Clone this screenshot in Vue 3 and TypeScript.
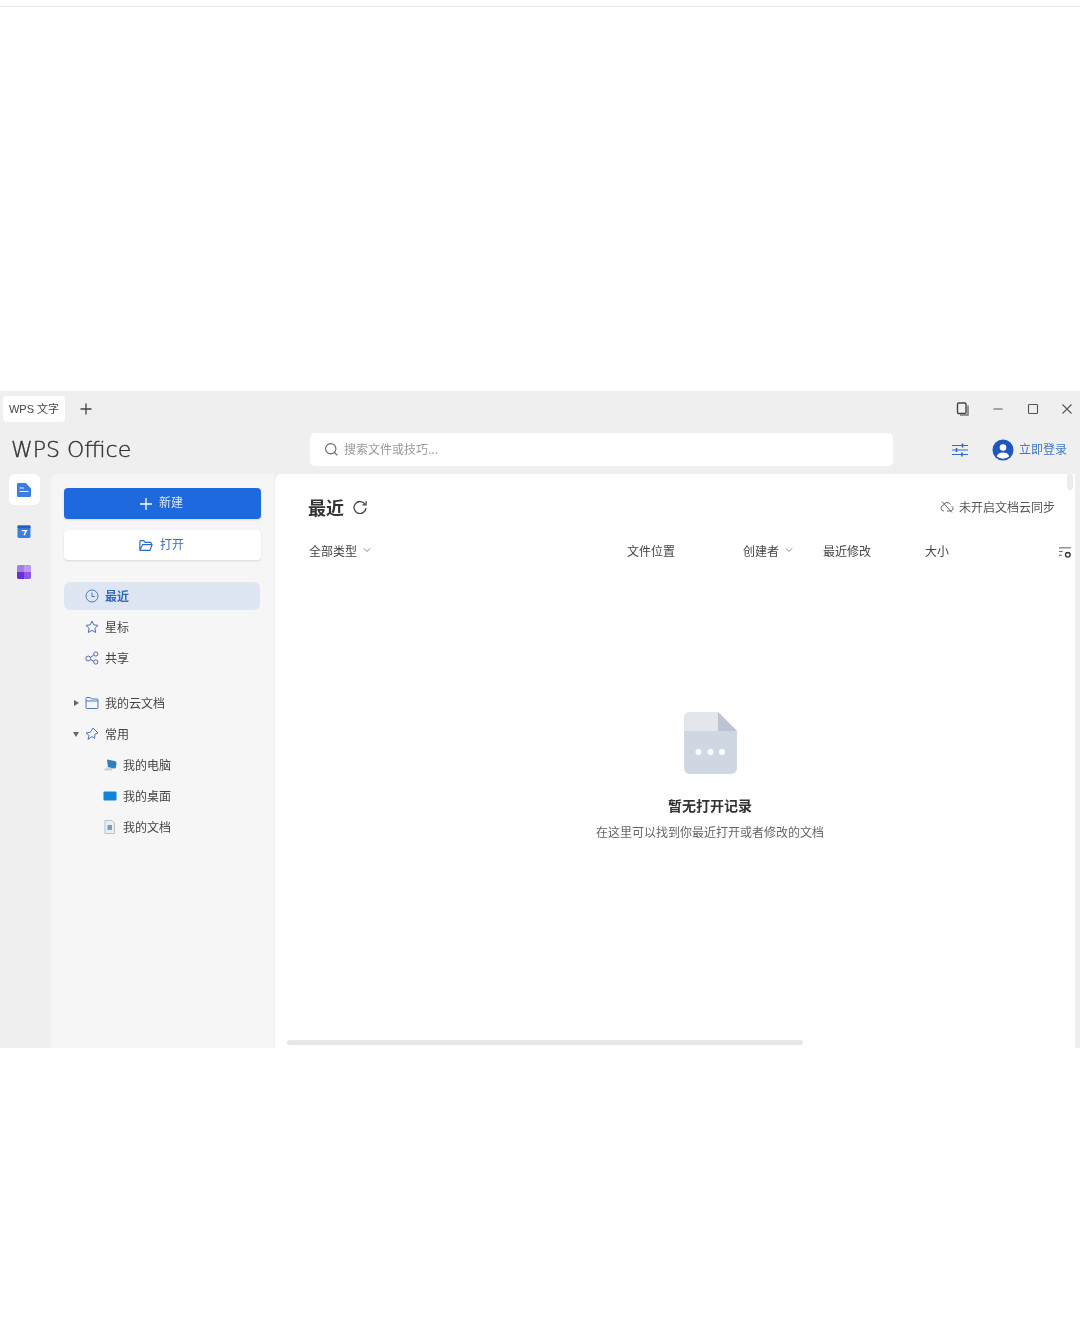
<script setup lang="ts">
const primaryNav = [
  { label: '最近', icon: 'clock', active: true },
  { label: '星标', icon: 'star', active: false },
  { label: '共享', icon: 'share', active: false },
]
const columns = ['文件位置', '创建者', '最近修改', '大小']
</script>

<template>
  <div class="page">
    <div class="topline"></div>
    <section class="window">
      <div class="titlebar">
        <div class="tab"><span>WPS 文字</span></div>
        <svg class="plus" viewBox="0 0 12 12" width="12" height="12"><path d="M6 .5v11M.5 6h11" stroke="#444" stroke-width="1.300" fill="none"/></svg>
        <div class="winctl">
          <svg viewBox="0 0 14 14" width="14" height="14"><rect x="1.500" y="1" width="8.500" height="10.500" rx="1.200" fill="none" stroke="#444" stroke-width="1.400"/><path d="M12 3.500v9.500H4" fill="none" stroke="#777" stroke-width="1.500"/></svg>
          <svg viewBox="0 0 12 12" width="12" height="12"><path d="M1.500 6h9" stroke="#666" stroke-width="1.100"/></svg>
          <svg viewBox="0 0 12 12" width="12" height="12"><rect x="1.500" y="1.500" width="9" height="9" rx="0.800" fill="none" stroke="#555" stroke-width="1.100"/></svg>
          <svg viewBox="0 0 12 12" width="12" height="12"><path d="M1.500 1.500l9 9M10.500 1.500l-9 9" stroke="#555" stroke-width="1.100"/></svg>
        </div>
      </div>
      <header class="appbar">
        <div class="logo">WPS Office</div>
        <div class="search">
          <svg viewBox="0 0 16 16" width="15" height="15"><circle cx="7.200" cy="7.200" r="5.500" fill="none" stroke="#666" stroke-width="1.200"/><path d="M11.200 11.200l3 3" stroke="#666" stroke-width="1.200"/></svg>
          <span>搜索文件或技巧...</span>
        </div>
        <div class="userbox">
          <svg viewBox="0 0 16 16" width="16" height="16"><path d="M0 3.500h16M0 8h16M0 12.500h16" stroke="#2f6cc4" stroke-width="1.200"/><path d="M10.500 1.500v4M4.500 6v4M10 10.500v4" stroke="#2f6cc4" stroke-width="1.600"/></svg>
          <div class="login">
            <svg viewBox="0 0 22 22" width="22" height="22"><circle cx="11" cy="11" r="10.500" fill="#1f56c3"/><circle cx="11" cy="8.500" r="3.300" fill="#fff"/><path d="M4.800 17.500a6.300 5 0 0 1 12.400 0a10 10 0 0 1-12.400 0z" fill="#fff"/></svg>
            <span>立即登录</span>
          </div>
        </div>
      </header>
      <div class="body">
        <nav class="rail">
          <div class="railitem on">
            <svg viewBox="0 0 14 14" width="14" height="14"><path d="M1.200 0h7.600L14 5.500v7.300a1.200 1.200 0 0 1-1.200 1.200H1.200A1.200 1.200 0 0 1 0 12.800V1.200A1.200 1.200 0 0 1 1.200 0z" fill="#3a7fdd"/><path d="M2.500 5h4.500M2.500 8.500h9" stroke="#e8f0fb" stroke-width="1.200"/></svg>
          </div>
          <div class="railitem">
            <svg viewBox="0 0 14 14" width="14" height="13"><rect x="0" y="0.500" width="14" height="13.500" rx="1.500" fill="#3a7fdd"/><rect x="0" y="0.500" width="14" height="3" rx="1" fill="#2560b8"/><path d="M4.500 6h5L7 11" fill="none" stroke="#fff" stroke-width="1.500"/></svg>
          </div>
          <div class="railitem">
            <svg viewBox="0 0 14 14" width="14" height="14"><rect x="0" y="0" width="14" height="14" rx="2" fill="#a67de6"/><path d="M0 7h7v7H2a2 2 0 0 1-2-2z" fill="#6a2fd6"/><path d="M7 7h7v5a2 2 0 0 1-2 2H7z" fill="#9257e0"/><path d="M7 0h5a2 2 0 0 1 2 2v5H7z" fill="#bb9aee"/></svg>
          </div>
        </nav>
        <aside class="sidebar">
          <button class="btn primary">
            <svg viewBox="0 0 12 12" width="12" height="12"><path d="M6 0v12M0 6h12" stroke="#fff" stroke-width="1.300"/></svg>
            <span>新建</span>
          </button>
          <button class="btn">
            <svg viewBox="0 0 16 14" width="14" height="13"><path d="M1 12V2.500a1 1 0 0 1 1-1h3.500L7 3.500h6a1 1 0 0 1 1 1V6M1 12.500h11.500l2.500-6.500H4z" fill="none" stroke="#2b68c5" stroke-width="1.300" stroke-linejoin="round"/></svg>
            <span>打开</span>
          </button>
          <ul class="nav">
            <li v-for="item in primaryNav" :key="item.label" class="row" :class="{ active: item.active }">
              <svg v-if="item.icon === 'clock'" viewBox="0 0 14 14" width="14" height="14"><circle cx="7" cy="7" r="6" fill="none" stroke="#4f78bd" stroke-width="1"/><path d="M7 3.500V7.500h3" fill="none" stroke="#4f78bd" stroke-width="1"/></svg>
              <svg v-else-if="item.icon === 'star'" viewBox="0 0 14 14" width="14" height="14"><path d="M7 1l1.800 3.900 4.200.5-3.100 2.900.8 4.200L7 10.400l-3.700 2.100.8-4.200L1 5.400l4.200-.5z" fill="none" stroke="#4f6fae" stroke-width="1" stroke-linejoin="round"/></svg>
              <svg v-else viewBox="0 0 14 14" width="14" height="14"><g fill="none" stroke="#4f6fae" stroke-width="1"><circle cx="3.200" cy="7.500" r="2.400"/><circle cx="10.800" cy="3" r="2.100"/><circle cx="10.800" cy="11" r="2.100"/><path d="M5.300 6.500l3.500-2.500M5.300 8.500l3.500 1.700"/></g></svg>
              <span>{{ item.label }}</span>
            </li>
          </ul>
          <ul class="nav tree">
            <li class="row">
              <i class="caret right"></i>
              <svg viewBox="0 0 14 14" width="14" height="14"><path d="M1 11.500V2.500a1 1 0 0 1 1-1h3.200L6.500 3H12a1 1 0 0 1 1 1v7.500a1 1 0 0 1-1 1H2a1 1 0 0 1-1-1zM1 5h12" fill="none" stroke="#4f78bd" stroke-width="1"/></svg>
              <span>我的云文档</span>
            </li>
            <li class="row">
              <i class="caret down"></i>
              <svg viewBox="0 0 14 14" width="14" height="14"><path d="M8 1l5 5-3 1.200-.5 4.300-2.500-2L3 12.500l1-4-3-2.500 4.300-.7z" fill="none" stroke="#4f78bd" stroke-width="1" stroke-linejoin="round"/></svg>
              <span>常用</span>
            </li>
            <li class="row sub">
              <svg viewBox="0 0 14 14" width="14" height="14"><path d="M4 1.500l7.500 1.500a2 2 0 0 1 2 2l-.5 4a2 2 0 0 1-2 1.500l-6-1z" fill="#2f7fc4"/><path d="M0.500 11.500l5-2.500 5 1.500-2 2H2z" fill="#c5d0d9"/></svg>
              <span>我的电脑</span>
            </li>
            <li class="row sub">
              <svg viewBox="0 0 14 14" width="14" height="14"><rect x="0.500" y="2.500" width="13" height="9" rx="0.800" fill="#0f86d8"/></svg>
              <span>我的桌面</span>
            </li>
            <li class="row sub">
              <svg viewBox="0 0 14 14" width="14" height="14"><path d="M2 .5h7l2.500 2.500v10.500H2z" fill="#e9eef2" stroke="#a9b6c0" stroke-width="0.800"/><rect x="4.500" y="5" width="4.500" height="5" fill="#7f9cb3"/></svg>
              <span>我的文档</span>
            </li>
          </ul>
        </aside>
        <main class="main">
          <div class="headline">
            <h1>最近</h1>
            <svg viewBox="0 0 14 14" width="14" height="14"><path d="M12.200 4.500A6 6 0 1 0 13 8" fill="none" stroke="#444" stroke-width="1.300"/><path d="M9.500 4.800h3.500V1.200" fill="none" stroke="#444" stroke-width="1.300"/></svg>
            <div class="sync">
              <svg viewBox="0 0 14 14" width="14" height="14"><g fill="none" stroke="#666" stroke-width="1"><path d="M4 11H3.500A2.800 2.800 0 0 1 3.200 5.500 4 4 0 0 1 10.500 4.500M11.800 6.200A2.600 2.600 0 0 1 10.500 11H7"/><path d="M2 1.500l10 11"/></g></svg>
              <span>未开启文档云同步</span>
            </div>
          </div>
          <div class="cols">
            <div class="col">全部类型 <svg viewBox="0 0 8 8" width="8" height="8"><path d="M1 2.500l3 3 3-3" fill="none" stroke="#777" stroke-width="0.900"/></svg></div>
            <div class="col">{{ columns[0] }}</div>
            <div class="col">{{ columns[1] }} <svg viewBox="0 0 8 8" width="8" height="8"><path d="M1 2.500l3 3 3-3" fill="none" stroke="#777" stroke-width="0.900"/></svg></div>
            <div class="col">{{ columns[2] }}</div>
            <div class="col">{{ columns[3] }}</div>
            <svg class="colcfg" viewBox="0 0 14 14" width="13" height="13"><path d="M0 2h13M0 6h4M0 10h3" stroke="#555" stroke-width="1"/><circle cx="9.500" cy="9.500" r="2.500" fill="none" stroke="#333" stroke-width="1.500"/></svg>
          </div>
          <div class="empty">
            <svg class="emptyicon" viewBox="0 0 53 62" width="53" height="62">
              <path d="M6 0h28l19 19v37a6 6 0 0 1-6 6H6a6 6 0 0 1-6-6V6a6 6 0 0 1 6-6z" fill="#cfd8e2"/>
              <path d="M6 0h28v19h19H0V6a6 6 0 0 1 6-6z" fill="#e3e6ea"/>
              <path d="M34 0l19 19H34z" fill="#bcc4d4"/>
              <circle cx="14.500" cy="40" r="3" fill="#fff"/><circle cx="26.500" cy="40" r="3" fill="#fff"/><circle cx="38" cy="40" r="3" fill="#fff"/>
            </svg>
            <h2>暂无打开记录</h2>
            <p>在这里可以找到你最近打开或者修改的文档</p>
          </div>
          <div class="hscroll"></div>
          <div class="vscroll"></div>
        </main>
        <div class="edge"></div>
      </div>
    </section>
  </div>
</template>

<style>
html, body { margin: 0; background: #fff; }
</style>

<style scoped>
.page {
  height: 1325px;
  background: #fff;
  overflow: hidden;
  font-family: "Noto Sans CJK SC", "Liberation Sans", sans-serif;
  color: #444;
  font-size: 12px;
}
.topline { height: 1px; margin-top: 6px; background: #e6e6e6; }
.window {
  margin-top: 384px;
  height: 657px;
  background: #efefef;
  display: flex;
  flex-direction: column;
  filter: blur(0.35px);
}
.titlebar { height: 35px; display: flex; align-items: center; padding: 0 7px 0 3px; }
.tab {
  width: 62px; height: 26px; margin-top: 1px; box-sizing: border-box; padding-bottom: 2px;
  background: #fff; border-radius: 4px;
  display: flex; align-items: center; justify-content: center;
  font-family: "Liberation Sans", "Noto Sans CJK SC", sans-serif;
  font-size: 11px; color: #444;
}
.plus { margin-left: 15px; }
.winctl { margin-left: auto; display: flex; align-items: center; gap: 22.5px; }
.appbar { height: 48px; box-sizing: border-box; padding: 0 13px 1px 11px; display: flex; align-items: center; }
.logo {
  width: 299px;
  font-family: "DejaVu Sans", "Liberation Sans", sans-serif;
  font-size: 22px; font-weight: 200; color: #333;
  -webkit-text-stroke: 0.4px #333;
  white-space: nowrap;
}
.search {
  width: 583px; height: 33px; box-sizing: border-box;
  background: #fff; border-radius: 5px;
  display: flex; align-items: center; gap: 5px; padding-left: 14px;
  color: #9a9a9a; font-size: 12px;
}
.search span, .login span, .row span, .sync span { padding-bottom: 2px; }
.btn span { padding-bottom: 4px; }
.userbox { margin-left: auto; display: flex; align-items: center; gap: 24px; }
.login { display: flex; align-items: center; gap: 5px; color: #3f78c9; font-size: 12px; }
.body { flex: 1; display: flex; min-height: 0; }
.rail { width: 51px; flex: none; padding-left: 9px; box-sizing: border-box; display: flex; flex-direction: column; gap: 10px; }
.railitem { width: 31px; height: 31px; box-sizing: border-box; padding: 1px 1px 0 0; display: flex; align-items: center; justify-content: center; border-radius: 6px; }
.railitem.on { background: #fff; }
.sidebar {
  width: 223px; flex: none; box-sizing: border-box;
  background: #f6f6f7; border-radius: 6px 0 0 0;
  padding: 14px 13px 0 13px;
  display: flex; flex-direction: column; align-items: flex-start;
}
.btn {
  width: 197px; height: 30px; border: 0; padding: 0 2px 0 0;
  background: #fff; color: #3f6fb8; border-radius: 4px;
  box-shadow: 0 1px 2px rgba(0,0,0,.12);
  display: flex; align-items: center; justify-content: center; gap: 7px;
  font: inherit; font-size: 12px;
}
.btn.primary { height: 31px; background: #1e69de; color: #dbe7f8; margin-bottom: 11px; }
.nav { list-style: none; margin: 22px 0 0; padding: 0; width: 196px; display: flex; flex-direction: column; gap: 3px; }
.nav.tree { margin-top: 17px; }
.row {
  height: 28px; box-sizing: border-box; border-radius: 6px;
  display: flex; align-items: center; gap: 6px; padding-left: 21px;
  color: #444; font-size: 12px;
}
.row.active { background: #dfe6f3; color: #2e68c0; font-weight: 700; }
.row.sub { padding-left: 39px; }
.tree .row:not(.sub) { padding-left: 9px; }
.caret { width: 0; height: 0; display: block; flex: none; }
.caret.right { border-left: 5px solid #666; border-top: 3.500px solid transparent; border-bottom: 3.500px solid transparent; margin-left: 1px; }
.caret.down { border-top: 5px solid #666; border-left: 3.500px solid transparent; border-right: 3.500px solid transparent; }
.main {
  position: relative;
  flex: 1; min-width: 0; margin-left: 1px;
  background: #fff; border-radius: 6px 0 0 0;
  display: flex; flex-direction: column;
}
.headline { height: 66px; box-sizing: border-box; display: flex; align-items: center; gap: 9px; padding: 0 20px 0 33px; }
h1 { margin: 0; font-size: 18px; font-weight: 700; color: #333; line-height: 1; }
.sync { margin-left: auto; display: flex; align-items: center; gap: 5px; font-size: 12px; color: #555; }
.cols {
  position: relative; height: 20px; padding-left: 34px;
  display: grid; grid-template-columns: 318px 116px 80px 102px 1fr; align-items: center;
  color: #444; font-size: 12px;
}
.col { white-space: nowrap; display: flex; align-items: center; gap: 6px; }
.colcfg { position: absolute; right: 3px; top: 6px; }
.empty { display: flex; flex-direction: column; align-items: center; padding: 152px 0 0 70px; }
.emptyicon { display: block; }
h2 { margin: 21px 0 0; font-size: 14px; font-weight: 700; color: #333; line-height: 20px; }
.empty p { margin: 7px 0 0; font-size: 12px; color: #666; line-height: 20px; }
.hscroll { position: absolute; left: 12px; bottom: 3px; width: 516px; height: 5px; border-radius: 3px; background: #e6e6e6; }
.vscroll { position: absolute; right: 2px; top: 0; width: 6px; height: 16px; border-radius: 3px; background: #ececec; }
.edge { width: 5px; flex: none; background: #efefef; }
</style>
